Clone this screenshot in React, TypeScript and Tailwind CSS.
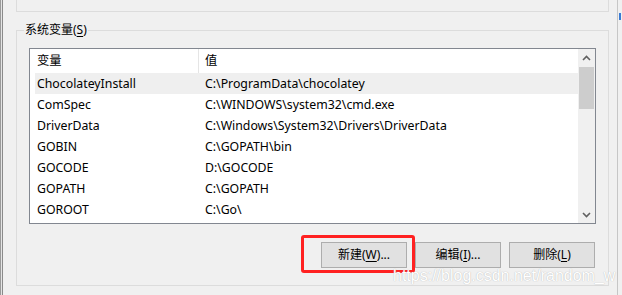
const rows: [string, string][] = [
  ["ChocolateyInstall", "C:\\ProgramData\\chocolatey"],
  ["ComSpec", "C:\\WINDOWS\\system32\\cmd.exe"],
  ["DriverData", "C:\\Windows\\System32\\Drivers\\DriverData"],
  ["GOBIN", "C:\\GOPATH\\bin"],
  ["GOCODE", "D:\\GOCODE"],
  ["GOPATH", "C:\\GOPATH"],
  ["GOROOT", "C:\\Go\\"],
];

function Chevron({ down }: { down?: boolean }) {
  return (
    <svg width="9" height="6" viewBox="0 0 9 6" className={down ? "rotate-180" : ""}>
      <path d="M1 5 L4.5 1.5 L8 5" fill="none" stroke="#606060" strokeWidth="1.6" />
    </svg>
  );
}

function Button({ label, hotkey, tail }: { label: string; hotkey: string; tail: string }) {
  return (
    <div className="flex h-[26px] w-[86px] items-center justify-center border border-[#adadad] bg-[#e1e1e1] text-[12px] text-black">
      {label}(<span className="underline underline-offset-2">{hotkey}</span>){tail}
    </div>
  );
}

export default function App() {
  return (
    <div className="relative flex h-[295px] w-[622px] overflow-hidden bg-[#f0f0f0] font-['Noto_Sans','Noto_Sans_CJK_SC',sans-serif] text-[12px] text-black">
      {/* window edge on the left */}
      <div className="flex h-full">
        <div className="w-px bg-[#9a9a9a]" />
        <div className="w-px bg-[#e4e4e4]" />
        <div className="w-px bg-[#8a8a8a]" />
      </div>

      <div className="w-[614px] pl-[13px]">
        {/* user variables group, cut off above */}
        <div className="h-[12px] w-[593px] border-x border-b border-[#dcdcdc]" />

        {/* system variables group */}
        <div className="relative mt-[18px] h-[256px] w-[593px] border border-[#dcdcdc] px-[12px] pt-[17px]">
          <div className="absolute left-[7px] top-[-10px] bg-[#f0f0f0] px-px leading-[18px]">
            系统变量(<span className="underline underline-offset-2">S</span>)
          </div>

          <div className="flex h-[176px] w-[567px] border border-[#828790] bg-white text-[12.3px]">
            <div className="flex-1 pl-[5px]">
              <div className="flex h-[24px] items-center">
                <div className="flex h-full w-[164px] items-center border-r border-[#e5e5e5] pl-[2px]">变量</div>
                <div className="pl-[6px]">值</div>
              </div>
              {rows.map(([name, value], i) => (
                <div
                  key={name}
                  className={`flex h-[21px] items-center pt-px ${i === 0 ? "bg-[#efefef]" : ""}`}
                >
                  <div className="w-[168px] pl-[2px]">{name}</div>
                  <div className="pl-[2px]">{value}</div>
                </div>
              ))}
            </div>
            <div className="flex w-[17px] flex-col bg-[#f0f0f0]">
              <div className="flex h-[17px] items-center justify-center">
                <Chevron />
              </div>
              <div className="mx-px mt-px h-[42px] bg-[#cdcdcd]" />
              <div className="flex-1" />
              <div className="flex h-[17px] items-center justify-center">
                <Chevron down />
              </div>
            </div>
          </div>

          <div className="mt-[18px] flex w-[566px] justify-end gap-2">
            <Button label="新建" hotkey="W" tail="..." />
            <Button label="编辑" hotkey="I" tail="..." />
            <Button label="删除" hotkey="L" tail="" />
          </div>
        </div>
      </div>

      {/* edge of the window behind */}
      <div className="w-px bg-[#c6c6c6]" />
      <div className="relative w-[4px]">
        <div className="absolute left-[1px] top-[13px] h-[7px] w-[2px] bg-[#3a7bd5]" />
      </div>

      {/* red annotation */}
      <div className="absolute left-[301px] top-[235px] h-[38px] w-[114px] rounded-[3px] border-[3px] border-[#ff2121]" />

      {/* watermark */}
      <div className="absolute left-[393px] top-[268px] font-['Liberation_Sans',Arial,sans-serif] text-[16px] leading-4 text-white [text-shadow:0_0_1px_#a8a8a8]">
        https://blog.csdn.net/random_w
      </div>
    </div>
  );
}
